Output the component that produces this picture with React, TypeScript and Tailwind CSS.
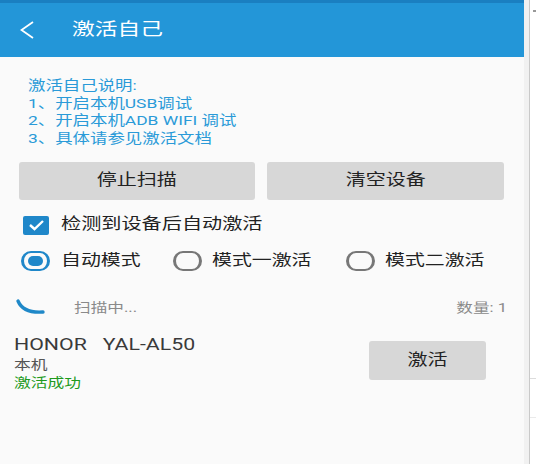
import React from 'react';

// Texte étiré horizontalement, comme sur la capture (écran Android étiré)
const S: React.FC<{ children: React.ReactNode; className?: string }> = ({ children, className = '' }) => (
  <span className={`inline-block scale-x-[1.3] whitespace-pre ${className}`}>{children}</span>
);

const Radio: React.FC<{ checked?: boolean }> = ({ checked }) => (
  <div
    className={`w-[29px] h-[20px] rounded-full border-x-[3px] border-y-2 flex items-center justify-center shrink-0 ${
      checked ? 'border-[#1f87c9]' : 'border-[#777]'
    }`}
  >
    {checked && <div className="w-[15px] h-[10px] rounded-full bg-[#1f87c9]" />}
  </div>
);

export default function App() {
  return (
    <div
      className="flex w-[536px] h-[464px] bg-white"
      style={{ fontFamily: 'Roboto, "Noto Sans CJK SC", sans-serif' }}
    >
      <div className="w-[524px] h-full flex flex-col bg-[#fafafa]">
        {/* barre d'état + en-tête */}
        <div className="h-[3px] bg-[#1a7fc1]" />
        <div className="h-[54px] bg-[#2396d8] flex items-center">
          <svg className="ml-[20px]" width="14" height="18" viewBox="0 0 14 18" fill="none">
            <path d="M13 1 L1.5 9 L13 17" stroke="white" strokeWidth="1.8" strokeLinejoin="miter" />
          </svg>
          <div className="ml-[38px] text-[17.5px] text-white leading-none">
            <S className="origin-left">激活自己</S>
          </div>
        </div>

        {/* instructions */}
        <div className="mt-[20px] ml-[28px] text-[13.4px] leading-[17.5px] text-[#2a9ad8]">
          <div><S className="origin-left">激活自己说明:</S></div>
          <div><S className="origin-left">1、开启本机USB调试</S></div>
          <div><S className="origin-left">2、开启本机ADB WIFI 调试</S></div>
          <div><S className="origin-left">3、具体请参见激活文档</S></div>
        </div>

        {/* boutons */}
        <div className="mt-[15px] ml-[19px] flex gap-[12px]">
          <button className="w-[236px] h-[38px] bg-[#d7d7d7] rounded-[3px] flex items-center justify-center text-[15.4px] text-[#222]">
            <S>停止扫描</S>
          </button>
          <button className="w-[237px] h-[38px] bg-[#d7d7d7] rounded-[3px] flex items-center justify-center text-[15.4px] text-[#222]">
            <S>清空设备</S>
          </button>
        </div>

        {/* case à cocher */}
        <div className="mt-[7px] h-[36px] flex items-center text-[15.5px] text-[#222]">
          <div className="ml-[23px] w-[26px] h-[19px] rounded-[2px] bg-[#1f87c9] flex items-center justify-center">
            <svg width="17" height="12" viewBox="0 0 17 12" fill="none">
              <path d="M2 6 L6.5 10 L15 2" stroke="white" strokeWidth="2.4" />
            </svg>
          </div>
          <div className="ml-[12px]">
            <S className="origin-left">检测到设备后自动激活</S>
          </div>
        </div>

        {/* modes */}
        <div className="h-[35px] flex items-center text-[15.3px] text-[#222]">
          <div className="ml-[21px] w-[152px] flex items-center">
            <Radio checked />
            <div className="ml-[11px]"><S className="origin-left">自动模式</S></div>
          </div>
          <div className="w-[173px] flex items-center">
            <Radio />
            <div className="ml-[10px]"><S className="origin-left">模式一激活</S></div>
          </div>
          <div className="flex items-center">
            <Radio />
            <div className="ml-[10px]"><S className="origin-left">模式二激活</S></div>
          </div>
        </div>

        {/* scan */}
        <div className="mt-[12px] h-[36px] flex items-center text-[12.8px] text-[#8a8a8a]">
          <svg className="ml-[15px] mb-[3px]" width="32" height="18" viewBox="0 0 32 18" fill="none">
            <path d="M3 3 C 6 10, 14 15, 28 14" stroke="#1f88c8" strokeWidth="3.4" strokeLinecap="round" />
          </svg>
          <div className="ml-[27px]"><S className="origin-left">扫描中...</S></div>
          <div className="ml-auto mr-[17px]"><S className="origin-right">数量: 1</S></div>
        </div>

        {/* appareil */}
        <div className="mt-[8px] flex">
          <div className="ml-[14px] w-[355px]">
            <div className="text-[16.4px] leading-[21px] text-[#3a3a3a]">
              <S className="origin-left">{'HONOR   YAL-AL50'}</S>
            </div>
            <div className="text-[12.9px] leading-[20px] text-[#555]">
              <S className="origin-left">本机</S>
            </div>
            <div className="text-[12.9px] leading-[16px] text-[#1e9a1e]">
              <S className="origin-left">激活成功</S>
            </div>
          </div>
          <button className="mt-[7px] w-[117px] h-[39px] bg-[#d7d7d7] rounded-[3px] flex items-center justify-center text-[15.4px] text-[#222]">
            <S>激活</S>
          </button>
        </div>
      </div>

      {/* bord droit */}
      <div className="w-[5px] h-full bg-[#f1f1f1]" />
      <div className="w-px h-full bg-[#c9c9c9]" />
      <div className="flex-1 h-full flex flex-col">
        <div className="h-[10px]" />
        <div className="ml-[3px] w-[3px] h-[2px] bg-[#999]" />
        <div className="h-[366px]" />
        <div className="h-px bg-[#dcdcdc]" />
        <div className="h-[38px]" />
        <div className="h-px bg-[#eaeaea]" />
      </div>
    </div>
  );
}
